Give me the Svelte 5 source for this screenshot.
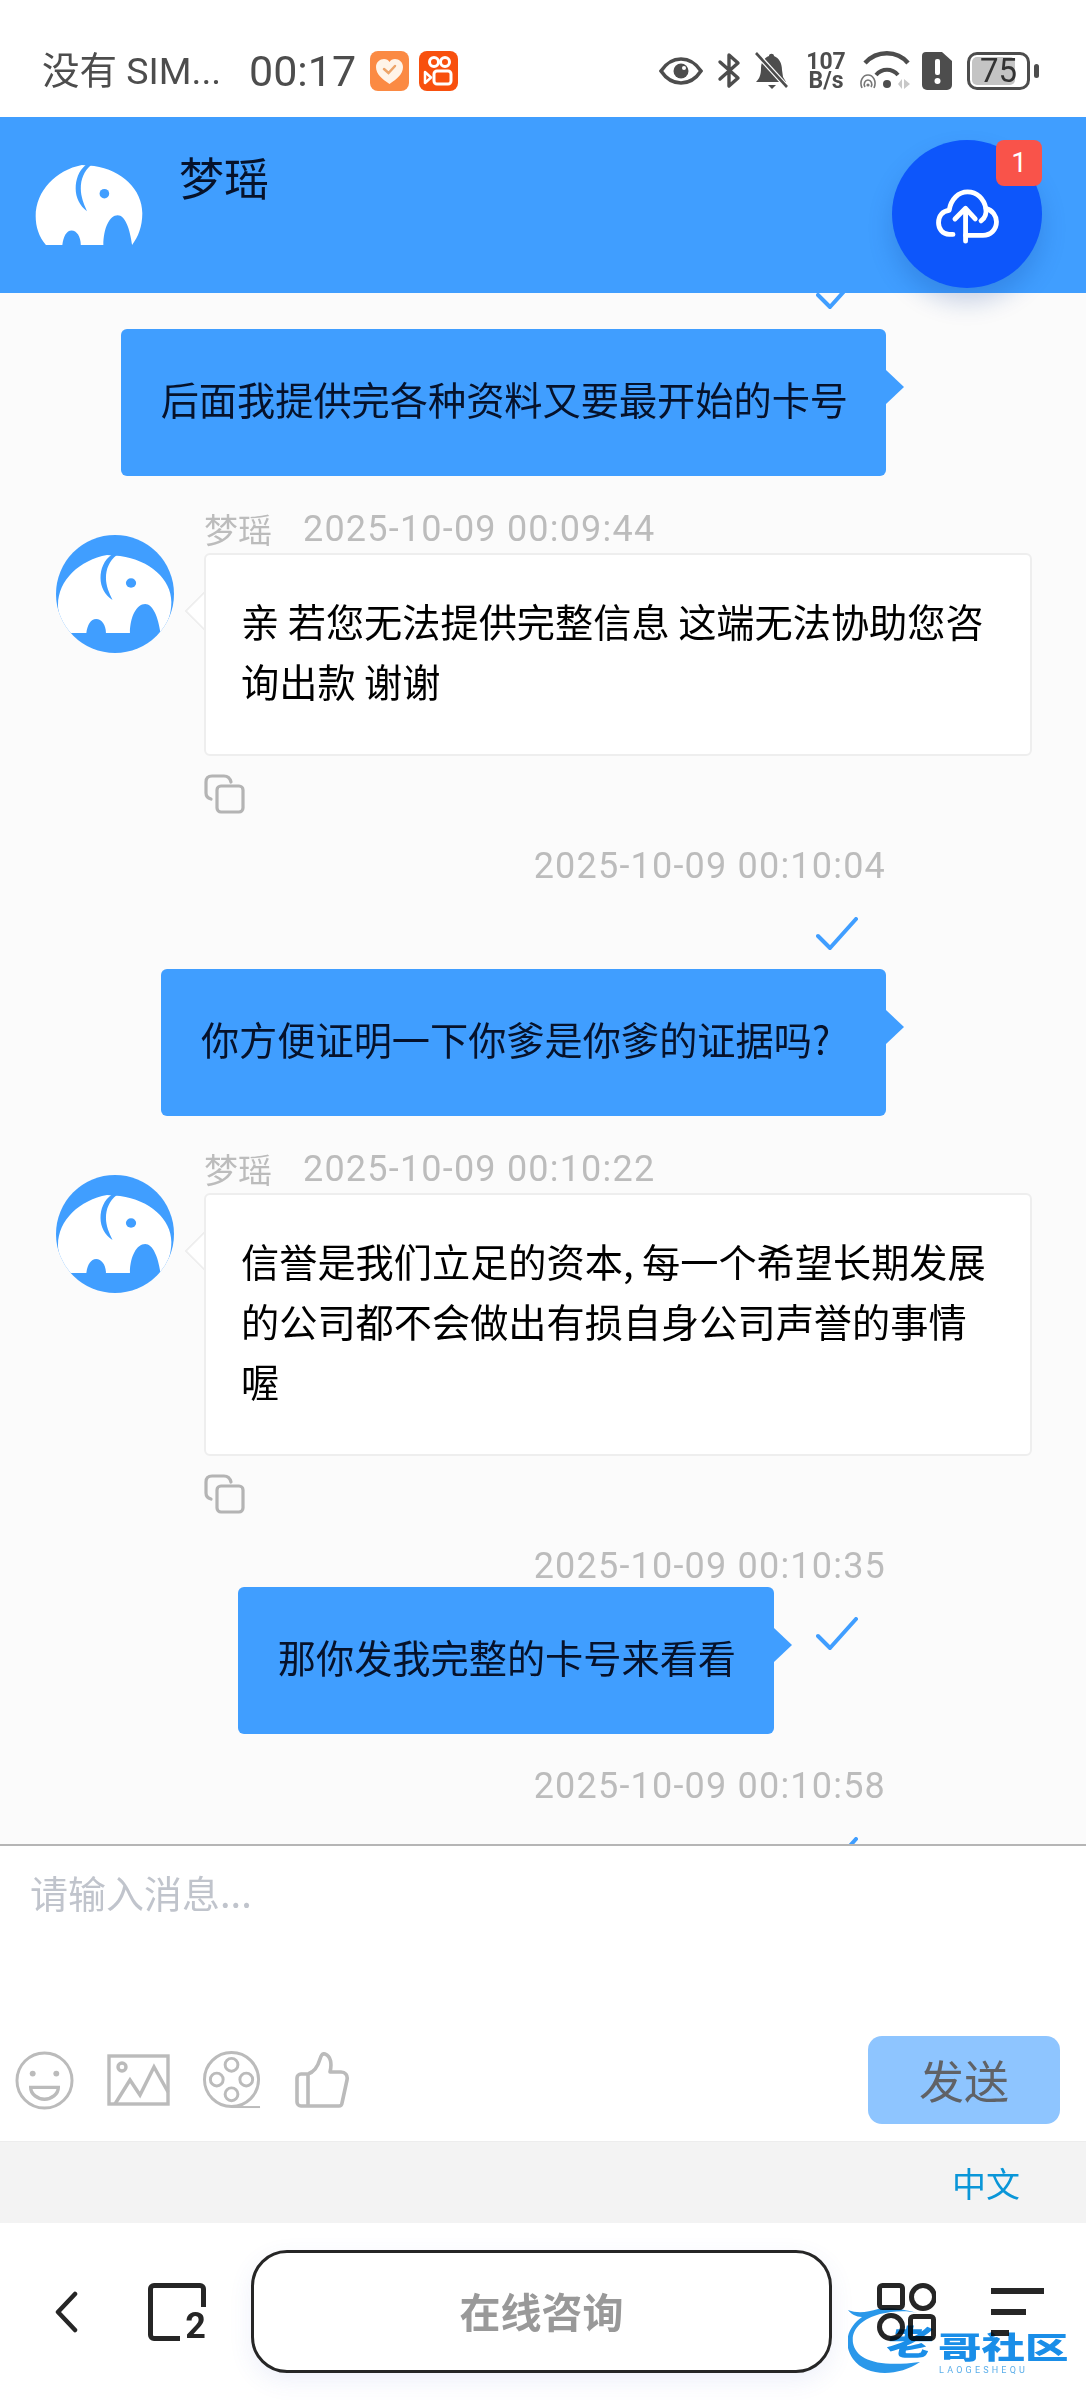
{#snippet elephant(bg)}
  <path fill="#fff" d="M10 78C3 70 0 60 0 50C0 25 20 5 45 0L57 1C84 5 104 24 104 47C104 60 100 70 94 78C92 62 87 49 80 49C72 49 66 62 66 78H44C44 70 40 64 35 64C30 64 27 70 26 78Z" />
  <path fill={bg} d="M50 -1C42 5 39 14 39 23C39 32 43 40 50 45C47 38 44 31 44 23C44 14 47 6 54 0Z" />
  <circle fill={bg} cx="67" cy="28" r="4.7" />
{/snippet}

{#snippet avatar()}
  <svg class="avatar" viewBox="0 0 118 118" width="118" height="118">
    <defs>
      <clipPath id="avatar-clip"><circle cx="59" cy="59" r="59" /></clipPath>
    </defs>
    <circle cx="59" cy="59" r="59" fill="#409eff" />
    <g clip-path="url(#avatar-clip)">
      <g transform="translate(2 20) scale(1.09 1)">
        {@render elephant("#409eff")}
      </g>
    </g>
  </svg>
{/snippet}

{#snippet check()}
  <svg viewBox="0 0 42 34" width="42" height="34" fill="none" stroke="#409eff" stroke-width="4" stroke-linecap="round" stroke-linejoin="round">
    <path d="M2 19L14 31L40 2" />
  </svg>
{/snippet}

{#snippet copy()}
  <svg class="copy" viewBox="0 0 41 40" width="41" height="40" fill="none" stroke="#b4b4b4" stroke-width="3.2" stroke-linecap="round" stroke-linejoin="round">
    <path d="M27 8C26 4 24 2 20 2H8C4 2 2 4 2 8V19C2 22 3 24 7 25" />
    <rect x="13" y="12" width="26" height="26" rx="4" />
  </svg>
{/snippet}

<div class="page">
  <div class="status">
    <span class="carrier">没有 SIM...</span>
    <span class="clock">00:17</span>
    <svg class="app" viewBox="0 0 39 40" width="39" height="40">
      <rect width="39" height="40" rx="8" fill="#fb8a43" />
      <path d="M19.5 33C12 28 6 23 6 16C6 11 10 8 14 8C16.500 8 18.500 9 19.500 11C20.500 9 22.500 8 25 8C29 8 33 11 33 16C33 23 27 28 19.500 33Z" fill="#fff4e8" />
      <path d="M14 18L18.500 22L25 15" fill="none" stroke="#eda468" stroke-width="2.500" stroke-linecap="round" />
    </svg>
    <svg class="app app2" viewBox="0 0 39 40" width="39" height="40">
      <rect width="39" height="40" rx="8" fill="#f8500e" />
      <g fill="none" stroke="#fff" stroke-width="3">
        <circle cx="15" cy="11" r="4.500" />
        <circle cx="26" cy="11" r="4.500" />
        <rect x="15" y="20" width="17" height="13" rx="3" />
      </g>
      <path d="M6 21L12 26.500L6 32Z" fill="none" stroke="#fff" stroke-width="2.500" stroke-linejoin="round" />
    </svg>

    <div class="status-right">
      <svg viewBox="0 0 44 28" width="44" height="28" class="s-eye">
        <path d="M2 14C8 5 15 2 22 2C29 2 36 5 42 14C36 23 29 26 22 26C15 26 8 23 2 14Z" fill="none" stroke="#4d4d4d" stroke-width="3.600" />
        <circle cx="22" cy="14" r="7.500" fill="#4d4d4d" />
        <circle cx="25" cy="11" r="2" fill="#fff" />
      </svg>
      <svg viewBox="0 0 25 37" width="25" height="37" class="s-bt">
        <path d="M3 10L21 26L12 34V3L21 11L3 27" fill="none" stroke="#4d4d4d" stroke-width="3.400" stroke-linecap="round" stroke-linejoin="round" />
      </svg>
      <svg viewBox="0 0 33 38" width="33" height="38" class="s-bell">
        <path d="M1 30C5 26 6 22 6 16C6 9 11 5 14 4C14 1 19 1 19 4C24 6 27 11 27 18L28 25L31 30Z" fill="#4d4d4d" />
        <path d="M13 33H21L17 37Z" fill="#4d4d4d" />
        <path d="M1 1L32 35" stroke="#fff" stroke-width="5" />
        <path d="M1 1L32 35" stroke="#4d4d4d" stroke-width="2.600" />
      </svg>
      <div class="speed"><span>107</span><span>B/s</span></div>
      <svg viewBox="0 0 50 39" width="50" height="39" class="s-wifi">
        <path d="M5 12C17 -1 37 -1 48 12" fill="none" stroke="#4d4d4d" stroke-width="4.400" />
        <path d="M16 24C22 17 32 17 38 24" fill="none" stroke="#4d4d4d" stroke-width="4" />
        <circle cx="27" cy="33" r="4" fill="#4d4d4d" />
        <g fill="none" stroke="#777" stroke-width="1.600">
          <path d="M2 37C-1 30 3 24 8 24C13 24 17 30 14 37" />
          <path d="M5 36C3 33 5 29 8 29C11 29 13 33 11 36" />
        </g>
        <circle cx="8" cy="34" r="1.600" fill="#777" />
        <path d="M42 28V38L38 33ZM44 28V38L50 33Z" fill="#c8c8c8" />
      </svg>
      <svg viewBox="0 0 30 38" width="30" height="38" class="s-sim">
        <path d="M4 0H20L30 9V33a5 5 0 0 1-5 5H5a5 5 0 0 1-5-5V4a4 4 0 0 1 4-4Z" fill="#4d4d4d" />
        <rect x="13" y="7" width="5" height="16" rx="2" fill="#fff" />
        <circle cx="15.500" cy="29" r="3" fill="#fff" />
      </svg>
      <div class="battery">
        <div class="level"></div>
        <span>75</span>
      </div>
      <div class="tip"></div>
    </div>
  </div>

  <header class="topbar">
    <svg class="logo" viewBox="0 0 104 79" width="108" height="81">
      {@render elephant("#409eff")}
    </svg>
    <div class="title">梦瑶</div>
    <div class="fab">
      <svg viewBox="0 0 66 58" width="65" height="56" fill="none" stroke="#fff" stroke-width="5" stroke-linecap="round" stroke-linejoin="round">
        <path d="M18 47H14C7 47 3 41 3 35C3 28 7 23 14 22C16 10 24 3 33 3C43 3 50 10 52 20C59 22 63 28 63 34C63 42 57 48 49 48H31" />
        <path d="M31 54V21M20 31L31 20L41 31" />
        <path d="M52 20C53 26 51 30 47 33" />
      </svg>
      <span class="badge">1</span>
    </div>
  </header>

  <main class="chat">
    <div class="check-row first">{@render check()}</div>
    <div class="mine"><div class="bubble blue">后面我提供完各种资料又要最开始的卡号</div></div>

    <div class="theirs">
      {@render avatar()}
      <div class="col">
        <div class="meta"><span class="who">梦瑶</span><span class="time">2025-10-09 00:09:44</span></div>
        <div class="bubble white">亲 若您无法提供完整信息 这端无法协助您咨询出款 谢谢</div>
        {@render copy()}
      </div>
    </div>

    <div class="stamp">2025-10-09 00:10:04</div>
    <div class="check-row">{@render check()}</div>
    <div class="mine tight"><div class="bubble blue wide">你方便证明一下你爹是你爹的证据吗?</div></div>

    <div class="theirs">
      {@render avatar()}
      <div class="col">
        <div class="meta"><span class="who">梦瑶</span><span class="time">2025-10-09 00:10:22</span></div>
        <div class="bubble white">信誉是我们立足的资本, 每一个希望长期发展的公司都不会做出有损自身公司声誉的事情喔</div>
        {@render copy()}
      </div>
    </div>

    <div class="stamp">2025-10-09 00:10:35</div>
    <div class="mine side">
      <div class="bubble blue">那你发我完整的卡号来看看</div>
      {@render check()}
    </div>

    <div class="stamp">2025-10-09 00:10:58</div>
    <div class="check-row">{@render check()}</div>
  </main>

  <section class="composer">
    <div class="placeholder">请输入消息...</div>
    <div class="tools">
      <div class="icons">
        <svg viewBox="0 0 60 60" width="59" height="59" fill="none" stroke="#bbb" stroke-width="3">
          <circle cx="30" cy="30" r="28" />
          <circle cx="18" cy="23" r="3" fill="#bbb" stroke="none" />
          <circle cx="42" cy="23" r="3" fill="#bbb" stroke="none" />
          <path d="M16 37H44C44 44 37 49 30 49C23 49 16 44 16 37Z" stroke-width="3.500" />
        </svg>
        <svg viewBox="0 0 63 52" width="63" height="52" fill="none" stroke="#bbb" stroke-width="3.400">
          <rect x="2" y="2" width="59" height="48" />
          <circle cx="15" cy="13" r="4" />
          <path d="M8 50L23 26L33 41L47 13L61 38" />
        </svg>
        <svg viewBox="0 0 60 60" width="59" height="59" fill="none" stroke="#bbb" stroke-width="3">
          <circle cx="29" cy="29" r="27.500" />
          <circle cx="29" cy="14" r="6.500" />
          <circle cx="29" cy="44" r="6.500" />
          <circle cx="14" cy="29" r="6.500" />
          <circle cx="44" cy="29" r="6.500" />
          <path d="M29 57H58" stroke-width="2" />
        </svg>
        <svg viewBox="0 0 54 56" width="54" height="56" fill="none" stroke="#bbb" stroke-width="3.600" stroke-linejoin="round">
          <path d="M12 22H6a4 4 0 0 0-4 4V50a4 4 0 0 0 4 4H44a3 3 0 0 0 3-3L52 28C53 23 50 20 46 20H35C37 12 36 4 30 2C27 1 26 4 25 7C23 14 19 20 13 22V54" />
        </svg>
      </div>
      <div class="send">发送</div>
    </div>
  </section>

  <div class="lang"><span>中文</span></div>

  <nav class="bottom">
    <svg class="back" viewBox="0 0 23 42" width="23" height="42" fill="none" stroke="#262626" stroke-width="4.500" stroke-linecap="round" stroke-linejoin="round">
      <path d="M20 3L3 21L20 39" />
    </svg>
    <div class="tabs">
      <svg viewBox="0 0 58 58" width="58" height="58" fill="none" stroke="#262626" stroke-width="5">
        <path d="M32 55.500H6a3.500 3.500 0 0 1-3.500-3.500V6A3.500 3.500 0 0 1 6 2.500H52A3.500 3.500 0 0 1 55.500 6V24" />
      </svg>
      <span>2</span>
    </div>
    <div class="consult">在线咨询</div>
    <svg class="grid" viewBox="0 0 59 58" width="59" height="58" fill="none" stroke="#262626" stroke-width="5">
      <rect x="2.500" y="2.500" width="23" height="22" rx="3" />
      <circle cx="46" cy="14" r="11.500" />
      <circle cx="14" cy="44" r="11.500" />
      <rect x="33.500" y="33.500" width="23" height="22" rx="3" />
    </svg>
    <div class="menu"><i></i><i class="mid"></i><i class="low"></i></div>

    <div class="watermark">
      <svg viewBox="0 0 105 70" width="105" height="70">
        <path d="M0 3C10 7 20 5 30 2C42 0 54 2 70 6C58 3 44 4 32 7C14 12 3 22 5 36C8 52 28 61 72 55C50 70 18 70 5 52C-6 36 0 20 14 10C8 10 3 7 0 3Z" fill="#2a98ea" />
      </svg>
      <span class="wm-lao">老</span>
      <span class="wm-text">哥社区</span>
      <span class="wm-sub">LAOGESHEQU</span>
    </div>
  </nav>
</div>

<style>
  :global(body) {
    margin: 0;
    background: #fff;
  }

  .page {
    width: 1086px;
    height: 2400px;
    overflow: hidden;
    display: flex;
    flex-direction: column;
    font-family: "Noto Sans CJK SC", "Noto Sans", sans-serif;
    color: #000;
  }

  /* status bar */
  .status {
    height: 117px;
    flex: none;
    display: flex;
    align-items: center;
    padding: 24px 47px 0 42px;
    box-sizing: border-box;
    color: #4d4d4d;
  }

  .carrier {
    font-size: 37.5px;
    line-height: 50px;
    font-family: "Roboto", "Noto Sans CJK SC", sans-serif;
    width: 207px;
    white-space: nowrap;
  }

  .clock {
    font-family: "Roboto", sans-serif;
    font-size: 43px;
    line-height: 50px;
    width: 121px;
  }

  .app2 {
    margin-left: 10px;
  }

  .status-right {
    margin-left: auto;
    height: 40px;
    display: flex;
    align-items: center;
  }

  .s-bt {
    margin-left: 14px;
  }

  .s-bell {
    margin-left: 13px;
  }

  .speed {
    margin-left: 19px;
    width: 38px;
    display: flex;
    flex-direction: column;
    align-items: center;
    font: 700 23px/19px "Roboto", sans-serif;
  }

  .s-wifi {
    margin-left: 15px;
  }

  .s-sim {
    margin-left: 12px;
  }

  .battery {
    margin-left: 15px;
    position: relative;
    width: 63px;
    height: 38px;
    box-sizing: border-box;
    border: 3px solid #4d4d4d;
    border-radius: 10px;
    text-align: center;
    font: 400 33px/32px "Roboto", sans-serif;
    color: #333;
    overflow: hidden;
  }

  .battery span {
    position: relative;
  }

  .level {
    position: absolute;
    left: 2px;
    top: 2px;
    bottom: 2px;
    width: 43px;
    background: #c4c4c4;
    border-radius: 5px;
  }

  .tip {
    width: 5px;
    height: 14px;
    margin-left: 4px;
    border-radius: 3px;
    background: #4d4d4d;
  }

  /* header */
  .topbar {
    position: relative;
    z-index: 2;
    height: 176px;
    flex: none;
    background: #409eff;
    display: flex;
    align-items: flex-start;
    padding: 48px 0 0 35px;
    box-sizing: border-box;
  }

  .title {
    font-size: 45px;
    line-height: 60px;
    margin: -18px 0 0 36px;
    color: #06122b;
  }

  .fab {
    position: absolute;
    left: 892px;
    top: 23px;
    width: 150px;
    height: 148px;
    border-radius: 50%;
    background: #0d56fb;
    box-shadow: 0 14px 24px rgba(13, 60, 150, 0.22);
    display: flex;
    align-items: center;
    justify-content: center;
  }

  .fab svg {
    margin-top: 6px;
  }

  .badge {
    position: absolute;
    right: 0;
    top: 0;
    width: 46px;
    height: 46px;
    border-radius: 8px;
    background: #f9534a;
    color: #fff;
    font: 400 28px/46px "Roboto", sans-serif;
    text-align: center;
  }

  /* chat */
  .chat {
    height: 1551px;
    flex: none;
    overflow: hidden;
    background: #fbfbfb;
    box-sizing: border-box;
  }

  .check-row {
    display: flex;
    justify-content: flex-end;
    height: 34px;
    margin-top: 33px;
    padding-right: 228px;
  }

  .check-row.first {
    margin-top: -17px;
  }

  .mine {
    display: flex;
    justify-content: flex-end;
    padding-right: 200px;
    margin-top: 19px;
  }

  .mine.tight {
    margin-top: 18px;
  }

  .mine.side {
    margin-top: 3px;
    padding-right: 228px;
    gap: 42px;
  }

  .mine.side svg {
    margin-top: 30px;
  }

  .bubble {
    position: relative;
    font-size: 38.2px;
    line-height: 60px;
    border-radius: 6px;
    box-sizing: border-box;
  }

  .blue {
    background: #409eff;
    color: #06122b;
    padding: 40px 38px 47px 40px;
    white-space: nowrap;
  }

  .blue.wide {
    padding-right: 56px;
  }

  .blue::after {
    content: "";
    position: absolute;
    right: -18px;
    top: 41px;
    border-left: 18px solid #409eff;
    border-top: 17px solid transparent;
    border-bottom: 17px solid transparent;
  }

  .white {
    width: 828px;
    background: #fff;
    border: 2px solid #eeeeee;
    padding: 36px 30px 43px 35px;
  }

  .white::before {
    content: "";
    position: absolute;
    left: -16px;
    top: 42px;
    width: 28px;
    height: 28px;
    box-sizing: border-box;
    background: #fff;
    border-left: 2px solid #eeeeee;
    border-bottom: 2px solid #eeeeee;
    transform: rotate(45deg);
    clip-path: polygon(0 0, 100% 100%, 0 100%);
  }

  .theirs {
    display: flex;
    margin-top: 32px;
    padding-left: 56px;
  }

  .avatar {
    margin: 27px 30px 0 0;
    flex: none;
  }

  .meta {
    height: 45px;
    display: flex;
    align-items: center;
    color: #bcbcbc;
    margin-top: -2px;
    margin-bottom: 2px;
  }

  .who {
    font-size: 34px;
    width: 99px;
    flex: none;
  }

  .time,
  .stamp {
    font-family: "Roboto", sans-serif;
    font-size: 36px;
    letter-spacing: 1.2px;
    color: #bcbcbc;
    white-space: nowrap;
  }

  .copy {
    display: block;
    margin-top: 18px;
  }

  .stamp {
    height: 40px;
    line-height: 44px;
    margin-top: 30px;
    padding-right: 200px;
    text-align: right;
  }

  /* composer */
  .composer {
    height: 298px;
    flex: none;
    box-sizing: border-box;
    background: #fff;
    border-top: 2px solid #b5b5b5;
    border-bottom: 1px solid #ededed;
    display: flex;
    flex-direction: column;
    justify-content: space-between;
    padding: 20px 26px 17px 15px;
  }

  .placeholder {
    padding-left: 15px;
    font-size: 38px;
    line-height: 52px;
    color: #c0c4cc;
  }

  .tools {
    display: flex;
    align-items: center;
    justify-content: space-between;
  }

  .icons {
    display: flex;
    align-items: center;
    gap: 33px;
  }

  .send {
    width: 192px;
    height: 88px;
    border-radius: 14px;
    background: #8ec5ff;
    color: #606266;
    font-size: 45px;
    line-height: 88px;
    text-align: center;
  }

  .lang {
    height: 81px;
    flex: none;
    background: #f3f3f3;
    display: flex;
    align-items: center;
    justify-content: flex-end;
    padding-right: 66px;
    color: #0a96d8;
    font-size: 34px;
  }

  /* bottom nav */
  .bottom {
    position: relative;
    height: 177px;
    flex: none;
    background: #fff;
    display: flex;
    align-items: center;
    padding-left: 55px;
  }

  .back {
    flex: none;
  }

  .tabs {
    position: relative;
    width: 58px;
    height: 58px;
    margin-left: 70px;
    flex: none;
  }

  .tabs svg {
    display: block;
  }

  .tabs span {
    position: absolute;
    right: 0;
    bottom: -3px;
    font: 700 36px/36px "Roboto", sans-serif;
    color: #262626;
  }

  .consult {
    margin-left: 45px;
    width: 581px;
    height: 123px;
    flex: none;
    box-sizing: border-box;
    border: 3px solid #262626;
    border-radius: 36px;
    background: #fff;
    box-shadow: 0 8px 24px rgba(70, 90, 200, 0.09);
    color: #999;
    font-size: 41px;
    font-weight: 700;
    line-height: 115px;
    text-align: center;
  }

  .grid {
    margin-left: 45px;
    flex: none;
  }

  .menu {
    margin-left: 55px;
    width: 53px;
    flex: none;
    display: flex;
    flex-direction: column;
    gap: 15px;
  }

  .menu i {
    display: block;
    height: 6px;
    background: #262626;
  }

  .menu .mid {
    width: 35px;
  }

  .menu .low {
    width: 18px;
  }

  .watermark {
    position: absolute;
    left: 848px;
    top: 84px;
    width: 222px;
    height: 70px;
    mix-blend-mode: multiply;
  }

  .watermark svg {
    display: block;
  }

  .wm-lao {
    position: absolute;
    left: 40px;
    top: 10px;
    font-size: 46px;
    line-height: 46px;
    font-weight: 900;
    color: #1a8ee8;
    transform: skewX(-12deg) scaleY(0.75);
  }

  .wm-text {
    position: absolute;
    left: 90px;
    top: 16px;
    font-size: 43.500px;
    line-height: 46px;
    font-weight: 900;
    white-space: nowrap;
    color: #1a8ee8;
    transform: scaleY(0.68);
    transform-origin: left center;
  }

  .wm-sub {
    position: absolute;
    left: 91px;
    top: 58px;
    font: 400 9px/10px "Roboto", sans-serif;
    letter-spacing: 3.200px;
    color: #5aaeea;
    white-space: nowrap;
  }
</style>
